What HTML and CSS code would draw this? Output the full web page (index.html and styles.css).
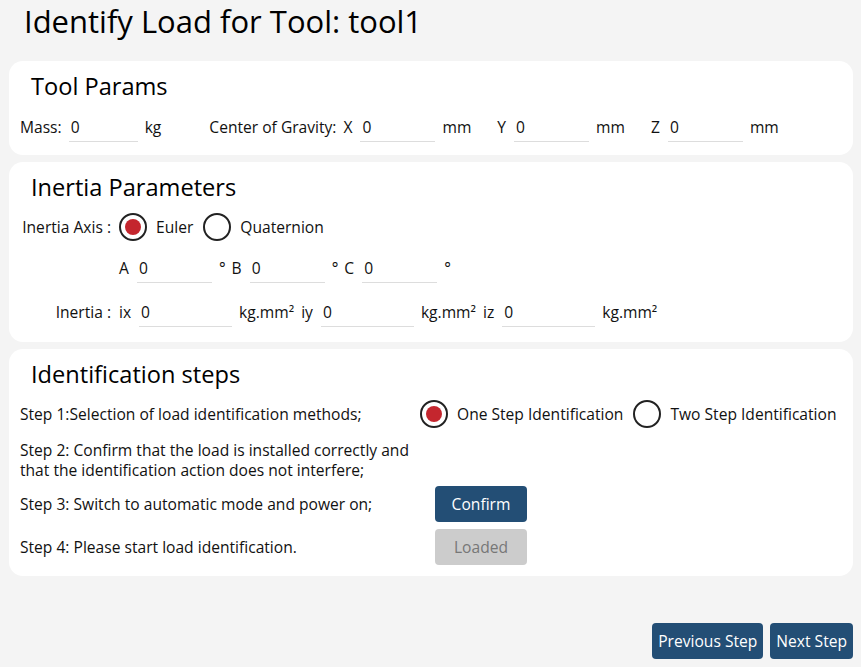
FILE: index.html
```html
<!DOCTYPE html>
<html lang="en">
  <head>
    <meta charset="UTF-8" />
    <title>Identify Load</title>
    <link rel="stylesheet" href="styles.css">
  </head>
  <body>
    <div class="page">
      <h1 class="title">Identify Load for Tool: tool1</h1>

      <!-- Tool params -->
      <section class="card card-tool">
        <h2>Tool Params</h2>
        <div class="row">
          <span class="lbl">Mass:</span>
          <input class="field f-mass" type="text" value="0" />
          <span class="unit u-kg">kg</span>
          <span class="lbl">Center of Gravity:</span>
          <span class="axis">X</span>
          <input class="field f-cog" type="text" value="0" />
          <span class="unit u-mm">mm</span>
          <span class="axis">Y</span>
          <input class="field f-cog" type="text" value="0" />
          <span class="unit u-mm">mm</span>
          <span class="axis">Z</span>
          <input class="field f-cog" type="text" value="0" />
          <span class="unit">mm</span>
        </div>
      </section>

      <!-- Inertia -->
      <section class="card card-inertia">
        <h2>Inertia Parameters</h2>
        <div class="row row-axis">
          <span class="side">Inertia Axis :</span>
          <label class="radio checked"><span class="dot"></span>Euler</label>
          <label class="radio"><span class="dot"></span>Quaternion</label>
        </div>
        <div class="row row-angle">
          <span class="side"></span>
          <span class="axis">A</span>
          <input class="field f-ang" type="text" value="0" />
          <span class="unit u-deg">°</span>
          <span class="axis">B</span>
          <input class="field f-ang" type="text" value="0" />
          <span class="unit u-deg">°</span>
          <span class="axis">C</span>
          <input class="field f-ang" type="text" value="0" />
          <span class="unit">°</span>
        </div>
        <div class="row row-iner">
          <span class="side">Inertia :</span>
          <span class="axis">ix</span>
          <input class="field f-in" type="text" value="0" />
          <span class="unit u-in">kg.mm²</span>
          <span class="axis">iy</span>
          <input class="field f-in" type="text" value="0" />
          <span class="unit u-in">kg.mm²</span>
          <span class="axis">iz</span>
          <input class="field f-in" type="text" value="0" />
          <span class="unit">kg.mm²</span>
        </div>
      </section>

      <!-- Steps -->
      <section class="card card-steps">
        <h2>Identification steps</h2>
        <div class="step step-1">
          <div class="step-text">Step 1:Selection of load identification methods;</div>
          <div class="step-ctl">
            <label class="radio checked"><span class="dot"></span>One Step Identification</label>
            <label class="radio"><span class="dot"></span>Two Step Identification</label>
          </div>
        </div>
        <div class="step step-2">
          <div class="step-text">Step 2: Confirm that the load is installed correctly and that the identification action does not interfere;</div>
        </div>
        <div class="step step-3">
          <div class="step-text">Step 3: Switch to automatic mode and power on;</div>
          <div class="step-ctl"><button class="btn">Confirm</button></div>
        </div>
        <div class="step step-4">
          <div class="step-text">Step 4: Please start load identification.</div>
          <div class="step-ctl"><button class="btn btn-off" disabled>Loaded</button></div>
        </div>
      </section>

      <div class="footer">
        <button class="btn btn-nav">Previous Step</button>
        <button class="btn btn-nav">Next Step</button>
      </div>
    </div>
  </body>
</html>
```

FILE: styles.css
```css
/* Identificación de carga */
body {
  margin: 0;
  background-color: #f4f4f4;
  font-family: "Open Sans", "Noto Sans", sans-serif;
  font-size: 15.6px;
  color: #111;
}
.page {
  padding: 0 8px 0 9px;
  height: 667px;
  box-sizing: border-box;
  display: flex;
  flex-direction: column;
}
.title {
  margin: 0;
  padding: 0 0 0 15px;
  height: 61px;
  line-height: 42px;
  font-size: 31px;
  font-weight: normal;
  color: #000;
}
.card {
  background-color: #fff;
  border-radius: 14px;
  padding: 0 11px;
  box-sizing: border-box;
  margin-bottom: 7px;
}
.card h2 {
  margin: 0;
  padding-left: 11px;
  font-size: 23.6px;
  font-weight: normal;
  color: #000;
}
.card-tool {
  height: 94px;
  padding-top: 10px;
}
.card-tool h2 {
  line-height: 30px;
}
.card-tool .row {
  margin-top: 11px;
}
.card-inertia {
  height: 180px;
  padding-top: 10px;
}
.card-inertia h2 {
  line-height: 30px;
}
.card-steps {
  height: 227px;
  padding-top: 10px;
}
.card-steps h2 {
  line-height: 30px;
}
.row {
  display: flex;
  align-items: center;
  height: 30px;
  white-space: nowrap;
}
.lbl {
  margin-right: 7px;
}
.axis {
  margin-right: 8px;
}
.unit {
  margin-left: 7px;
}
.u-kg {
  margin-right: 48px;
}
.u-mm {
  margin-right: 26px;
}
.u-deg {
  margin-right: 6px;
}
.u-in {
  margin-right: 7px;
}
.field {
  font: inherit;
  color: #111;
  border: none;
  border-bottom: 1px solid #ddd;
  padding: 4px 2px 4px;
  outline: none;
  box-sizing: border-box;
  height: 30px;
}
.f-mass {
  width: 69px;
}
.f-cog,
.f-ang {
  width: 75px;
}
.f-in {
  width: 93px;
}
.side {
  width: 91px;
  text-align: right;
  margin-right: 8px;
  flex: none;
}
.row-axis {
  margin-top: 9px;
  height: 32px;
}
.row-angle {
  margin-top: 10px;
}
.row-iner {
  margin-top: 14px;
}
.radio {
  display: flex;
  align-items: center;
  flex: none;
  white-space: nowrap;
  margin-right: 10px;
}
.dot {
  width: 28px;
  height: 28px;
  box-sizing: border-box;
  border: 2px solid #222;
  border-radius: 50%;
  margin-right: 9px;
  display: flex;
  align-items: center;
  justify-content: center;
  flex: none;
}
.radio.checked .dot::after {
  content: "";
  width: 16px;
  height: 16px;
  border-radius: 50%;
  background-color: #c4262e;
}
.step {
  display: flex;
  align-items: center;
}
.step-text {
  width: 400px;
  flex: none;
}
.step-ctl {
  display: flex;
  align-items: center;
  flex: none;
}
.step-1 {
  margin-top: 10px;
  height: 30px;
}
.step-2 {
  margin-top: 11px;
  line-height: 20px;
}
.step-3 {
  margin-top: 6px;
  height: 36px;
}
.step-3 .btn,
.step-4 .btn {
  margin-left: 15px;
}
.step-4 {
  margin-top: 7px;
  height: 36px;
}
.btn {
  font: inherit;
  font-size: 15.6px;
  height: 36px;
  width: 92px;
  border: none;
  border-radius: 4px;
  background-color: #234e75;
  color: #fff;
  cursor: pointer;
}
.btn-off {
  background-color: #cccccc;
  color: #777;
  cursor: default;
}
.footer {
  margin-top: auto;
  margin-bottom: 8px;
  display: flex;
  justify-content: flex-end;
  gap: 7px;
}
.btn-nav {
  width: auto;
  padding: 0 6px;
}
```
